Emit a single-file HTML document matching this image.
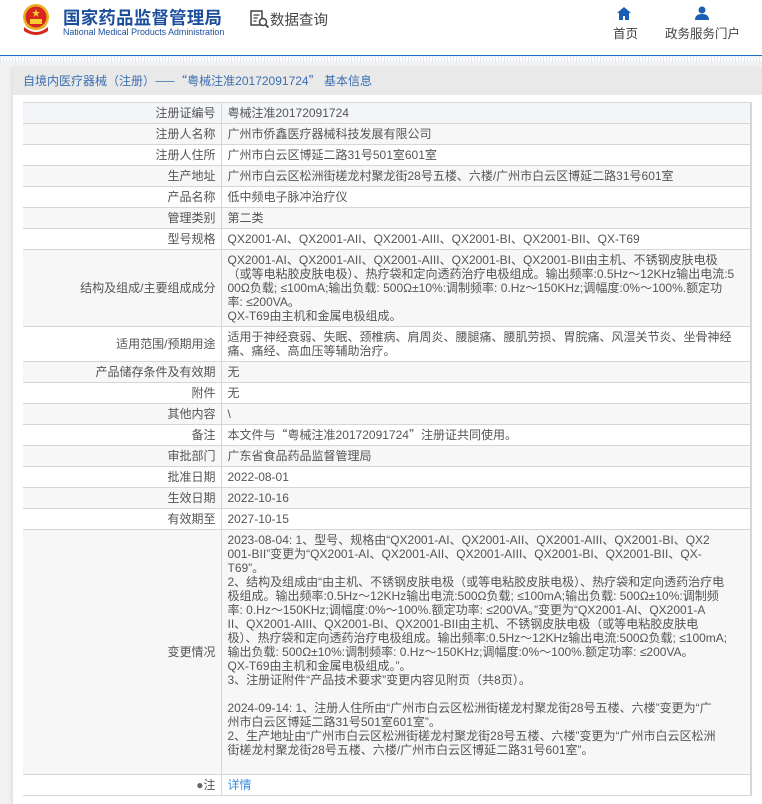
<!DOCTYPE html>
<html><head><meta charset="utf-8">
<style>
*{margin:0;padding:0;box-sizing:border-box}
body{width:762px;height:804px;overflow:hidden;background:#f2f2f2;font-family:"Liberation Sans","Noto Sans CJK SC",sans-serif;color:#555;font-size:12px;position:relative}
.hdr{position:absolute;left:0;top:0;width:762px;height:56px;background:#fff;border-bottom:1px solid #1a6fc2}
.dots{position:absolute;left:0;top:57px;width:762px;height:4px;background:repeating-linear-gradient(90deg,#dfe8f2 0 1px,#fff 1px 3px)}
.logo{position:absolute;left:21px;top:3px;width:30px;height:33px}
.t1{position:absolute;left:63px;top:5px;font-size:17.4px;font-weight:bold;color:#1b4e9b;letter-spacing:0.3px;white-space:nowrap}
.t2{position:absolute;left:63px;top:27px;font-size:8.9px;color:#1b4e9b;white-space:nowrap}
.sq{position:absolute;left:250px;top:9px;font-size:14.5px;color:#444;white-space:nowrap}
.nav{position:absolute;top:23px;font-size:12.5px;color:#444;white-space:nowrap}
.panel{position:absolute;left:13px;top:67px;width:749px;height:737px;background:#fff;box-shadow:-2px 0 4px rgba(0,0,0,.08)}
.tbar{position:absolute;left:0;top:0;width:749px;height:28px;background:#e9e9e9;color:#3c6fb0;font-size:12px;line-height:28px;padding-left:10px;white-space:nowrap}
.q{font-family:"Noto Sans CJK SC",sans-serif}
table{position:absolute;left:10px;top:35px;width:729px;border-collapse:collapse;font-size:12px}
td{border:1px solid #d6d6d6;line-height:14px;padding:3px 6px 3px 6px;vertical-align:middle;white-space:nowrap}
td.l{width:198px;text-align:right;padding-right:5px;border-left:none}
td.v{border-right:2px solid #d6d6d6}
tr:nth-child(even) td{background:#f7f7f7}
tr:first-child td{background:#f3f5f9}
a{color:#3d8fe0;text-decoration:none}
</style></head><body>
<div class="hdr">
<svg class="logo" viewBox="0 0 30 33"><circle cx="15" cy="14" r="13" fill="#e8b020"/><circle cx="15" cy="14" r="10.5" fill="#d7261e"/><polygon points="15,6 16,9 19,9 16.5,10.8 17.5,14 15,12 12.5,14 13.5,10.8 11,9 14,9" fill="#f5d030"/><rect x="9" y="16" width="12" height="5" fill="#f5d030"/><path d="M3 24 Q15 34 27 24 L27 28 Q15 36 3 28Z" fill="#d7261e"/><path d="M5 22 Q15 30 25 22" stroke="#e8b020" stroke-width="2" fill="none"/></svg>
<div class="t1">国家药品监督管理局</div>
<div class="t2">National Medical Products Administration</div>
<div class="sq"><svg width="20" height="18" viewBox="0 0 20 18" style="vertical-align:-3px"><rect x="1" y="1" width="11" height="14" fill="none" stroke="#444" stroke-width="1.5"/><path d="M3.5 5h6M3.5 8h4M3.5 11h3" stroke="#444" stroke-width="1.2"/><circle cx="13" cy="12" r="3.5" fill="#fff" stroke="#444" stroke-width="1.5"/><path d="M15.5 14.5l3 3" stroke="#444" stroke-width="1.8"/></svg>数据查询</div>
<svg style="position:absolute;left:617px;top:7px" width="14" height="13" viewBox="0 0 14 13"><path d="M7 0L0 6h2v7h4V9h2v4h4V6h2z" fill="#1a5fb4"/></svg>
<div class="nav" style="left:613px">首页</div>
<svg style="position:absolute;left:695px;top:6px" width="14" height="14" viewBox="0 0 14 14"><circle cx="7" cy="4" r="3.5" fill="#1a5fb4"/><path d="M0 14Q0 8 7 8Q14 8 14 14z" fill="#1a5fb4"/></svg>
<div class="nav" style="left:665px">政务服务门户</div>
</div>
<div class="dots"></div>
<div class="panel">
<div class="tbar">自境内医疗器械<span class="q">（</span>注册<span class="q">）——“</span>粤械注准20172091724<span class="q">”</span>&nbsp;基本信息</div>
<table>
<tr><td class="l">注册证编号</td><td class="v">粤械注准20172091724</td></tr>
<tr><td class="l">注册人名称</td><td class="v">广州市侨鑫医疗器械科技发展有限公司</td></tr>
<tr><td class="l">注册人住所</td><td class="v">广州市白云区博延二路31号501室601室</td></tr>
<tr><td class="l">生产地址</td><td class="v">广州市白云区松洲街槎龙村聚龙街28号五楼、六楼/广州市白云区博延二路31号601室</td></tr>
<tr><td class="l">产品名称</td><td class="v">低中频电子脉冲治疗仪</td></tr>
<tr><td class="l">管理类别</td><td class="v">第二类</td></tr>
<tr><td class="l">型号规格</td><td class="v">QX2001-AI、QX2001-AII、QX2001-AIII、QX2001-BI、QX2001-BII、QX-T69</td></tr>
<tr><td class="l">结构及组成/主要组成成分</td><td class="v">QX2001-AI、QX2001-AII、QX2001-AIII、QX2001-BI、QX2001-BII由主机、不锈钢皮肤电极<br>（或等电粘胶皮肤电极）、热疗袋和定向透药治疗电极组成。输出频率:0.5Hz～12KHz输出电流:5<br>00Ω负载; ≤100mA;输出负载: 500Ω±10%:调制频率: 0.Hz～150KHz;调幅度:0%～100%.额定功<br>率: ≤200VA。<br>QX-T69由主机和金属电极组成。</td></tr>
<tr><td class="l">适用范围/预期用途</td><td class="v">适用于神经衰弱、失眠、颈椎病、肩周炎、腰腿痛、腰肌劳损、胃脘痛、风湿关节炎、坐骨神经<br>痛、痛经、高血压等辅助治疗。</td></tr>
<tr><td class="l">产品储存条件及有效期</td><td class="v">无</td></tr>
<tr><td class="l">附件</td><td class="v">无</td></tr>
<tr><td class="l">其他内容</td><td class="v">\</td></tr>
<tr><td class="l">备注</td><td class="v">本文件与<span class="q">“</span>粤械注准20172091724<span class="q">”</span>注册证共同使用。</td></tr>
<tr><td class="l">审批部门</td><td class="v">广东省食品药品监督管理局</td></tr>
<tr><td class="l">批准日期</td><td class="v">2022-08-01</td></tr>
<tr><td class="l">生效日期</td><td class="v">2022-10-16</td></tr>
<tr><td class="l">有效期至</td><td class="v">2027-10-15</td></tr>
<tr><td class="l">变更情况</td><td class="v">2023-08-04: 1、型号、规格由“QX2001-AI、QX2001-AII、QX2001-AIII、QX2001-BI、QX2<br>001-BII”变更为“QX2001-AI、QX2001-AII、QX2001-AIII、QX2001-BI、QX2001-BII、QX-<br>T69”。<br>2、结构及组成由“由主机、不锈钢皮肤电极（或等电粘胶皮肤电极）、热疗袋和定向透药治疗电<br>极组成。输出频率:0.5Hz～12KHz输出电流:500Ω负载; ≤100mA;输出负载: 500Ω±10%:调制频<br>率: 0.Hz～150KHz;调幅度:0%～100%.额定功率: ≤200VA。”变更为“QX2001-AI、QX2001-A<br>II、QX2001-AIII、QX2001-BI、QX2001-BII由主机、不锈钢皮肤电极（或等电粘胶皮肤电<br>极）、热疗袋和定向透药治疗电极组成。输出频率:0.5Hz～12KHz输出电流:500Ω负载; ≤100mA;<br>输出负载: 500Ω±10%:调制频率: 0.Hz～150KHz;调幅度:0%～100%.额定功率: ≤200VA。<br>QX-T69由主机和金属电极组成。”。<br>3、注册证附件“产品技术要求”变更内容见附页（共8页）。<br>&nbsp;<br>2024-09-14: 1、注册人住所由“广州市白云区松洲街槎龙村聚龙街28号五楼、六楼”变更为“广<br>州市白云区博延二路31号501室601室”。<br>2、生产地址由“广州市白云区松洲街槎龙村聚龙街28号五楼、六楼”变更为“广州市白云区松洲<br>街槎龙村聚龙街28号五楼、六楼/广州市白云区博延二路31号601室”。<br>&nbsp;</td></tr>
<tr><td class="l"><span style="color:#666">●</span>注</td><td class="v"><a>详情</a></td></tr>
</table>
</div>
</body></html>
